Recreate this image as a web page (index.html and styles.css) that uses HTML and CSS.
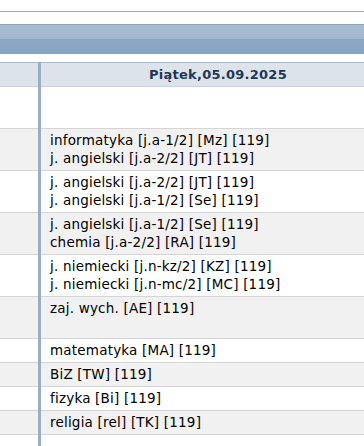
FILE: index.html
```html
<!DOCTYPE html>
<html lang="pl">
<head>
<meta charset="utf-8">
<title>Plan lekcji</title>
<link rel="stylesheet" href="styles.css">
</head>
<body>
<div class="topline"></div>
<div class="bar"></div>
<table class="plan">
  <thead>
    <tr><th class="nr"></th><th class="day">Piątek,05.09.2025</th></tr>
  </thead>
  <tbody>
    <tr><td class="nr"></td><td class="l h2"></td></tr>
    <tr class="odd"><td class="nr"></td><td class="l">informatyka [j.a-1/2] [Mz] [119]<br>j. angielski [j.a-2/2] [JT] [119]</td></tr>
    <tr><td class="nr"></td><td class="l">j. angielski [j.a-2/2] [JT] [119]<br>j. angielski [j.a-1/2] [Se] [119]</td></tr>
    <tr class="odd"><td class="nr"></td><td class="l">j. angielski [j.a-1/2] [Se] [119]<br>chemia [j.a-2/2] [RA] [119]</td></tr>
    <tr><td class="nr"></td><td class="l">j. niemiecki [j.n-kz/2] [KZ] [119]<br>j. niemiecki [j.n-mc/2] [MC] [119]</td></tr>
    <tr class="odd"><td class="nr"></td><td class="l h2">zaj. wych. [AE] [119]</td></tr>
    <tr><td class="nr"></td><td class="l">matematyka [MA] [119]</td></tr>
    <tr class="odd"><td class="nr"></td><td class="l">BiZ [TW] [119]</td></tr>
    <tr><td class="nr"></td><td class="l">fizyka [Bi] [119]</td></tr>
    <tr class="odd"><td class="nr"></td><td class="l">religia [rel] [TK] [119]</td></tr>
    <tr><td class="nr"></td><td class="l"></td></tr>
  </tbody>
</table>
</body>
</html>
```
FILE: styles.css
```css
html, body {
  margin: 0;
  padding: 0;
  background: #fff;
  overflow: hidden;
}
body {
  font-family: "DejaVu Sans", "Liberation Sans", sans-serif;
  font-size: 13.5px;
  letter-spacing: 0.2px;
  color: #000;
}
.topline {
  height: 11px;
  border-bottom: 1px solid #9aabbc;
}
.bar {
  margin-top: 12px;
  height: 29px;
  border-top: 1px solid #8fa3b8;
  background: linear-gradient(to bottom, #a7bdd2 0%, #9fb6cd 50%, #8ba7c3 50%, #88a4c1 100%);
}
.plan {
  margin-top: 8px;
  width: 100%;
  border-collapse: collapse;
  table-layout: fixed;
}
.plan th {
  height: 23px;
  padding: 0;
  background: #dce3eb;
  border-top: 1px solid #a7b8c9;
  border-bottom: 1px solid #c9d2dc;
  font-size: 13px;
  letter-spacing: 0.25px;
  font-weight: bold;
  color: #1f3756;
  text-align: center;
  vertical-align: middle;
}
.plan th.day {
  padding-left: 31px;
}
.plan .nr {
  width: 38px;
  padding: 0;
}
.plan .day,
.plan .l {
  border-left: 3px solid #99aec4;
}
.plan td {
  border-bottom: 1px solid #d4d4d4;
  vertical-align: top;
}
.plan td.l {
  padding: 2px 9px 3px 9px;
  line-height: 18px;
  height: 18px;
  white-space: nowrap;
  overflow: hidden;
}
.plan td.h2 {
  height: 36px;
}
.plan tr.odd td {
  background: #f1f1f1;
}
```
